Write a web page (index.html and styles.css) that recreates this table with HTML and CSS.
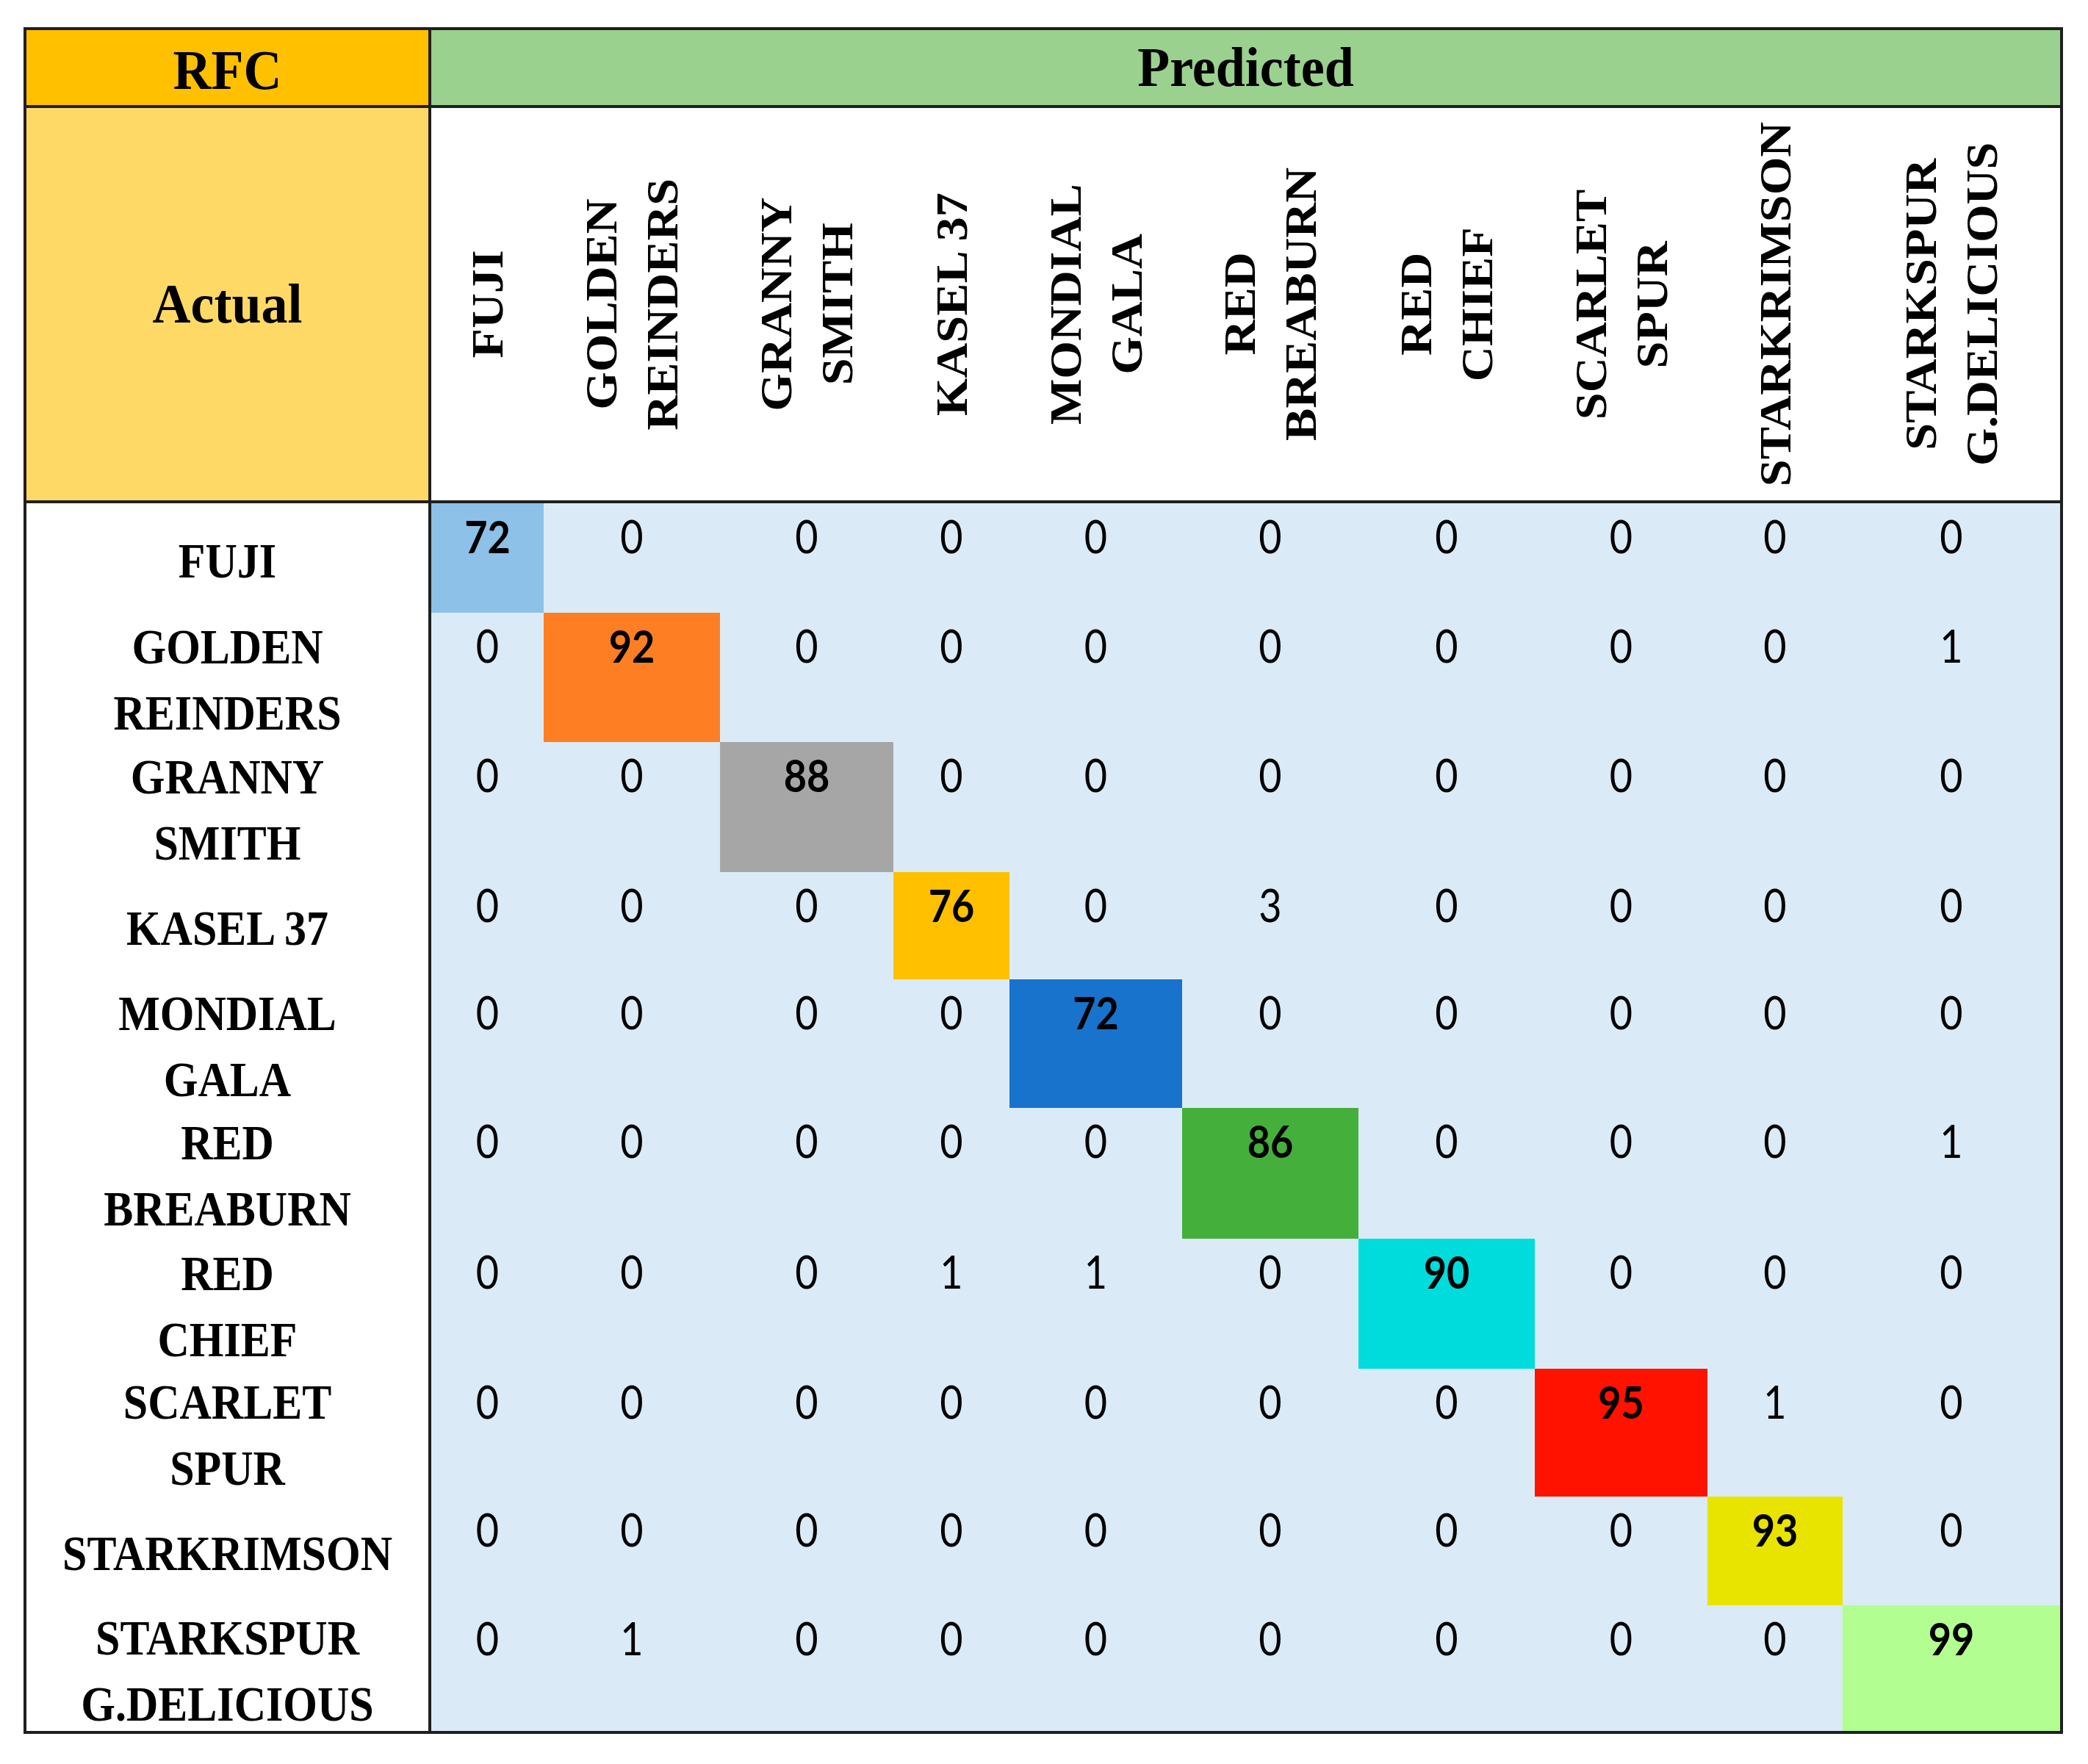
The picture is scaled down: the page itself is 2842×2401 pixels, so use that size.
FILE: index.html
```html
<!DOCTYPE html>
<html lang="en">
<head>
<meta charset="utf-8">
<title>RFC confusion matrix</title>
<link rel="stylesheet" href="styles.css">
</head>
<body>
<div class="matrix">
  <div class="rfc"><span class="title">RFC</span></div>
  <div class="pred-head"><span class="title">Predicted</span></div>
  <div class="actual"><span class="title">Actual</span></div>

  <div class="col-head"><span class="vlabel">FUJI</span></div>
  <div class="col-head"><span class="vlabel">GOLDEN<br>REINDERS</span></div>
  <div class="col-head"><span class="vlabel">GRANNY<br>SMITH</span></div>
  <div class="col-head"><span class="vlabel">KASEL 37</span></div>
  <div class="col-head"><span class="vlabel">MONDIAL<br>GALA</span></div>
  <div class="col-head"><span class="vlabel">RED<br>BREABURN</span></div>
  <div class="col-head"><span class="vlabel">RED<br>CHIEF</span></div>
  <div class="col-head"><span class="vlabel">SCARLET<br>SPUR</span></div>
  <div class="col-head"><span class="vlabel">STARKRIMSON</span></div>
  <div class="col-head"><span class="vlabel">STARKSPUR<br>G.DELICIOUS</span></div>

  <div class="row-head"><span class="hlabel">FUJI</span></div>
  <div class="cell diag c1"><span class="num">72</span></div>
  <div class="cell"><span class="num">0</span></div>
  <div class="cell"><span class="num">0</span></div>
  <div class="cell"><span class="num">0</span></div>
  <div class="cell"><span class="num">0</span></div>
  <div class="cell"><span class="num">0</span></div>
  <div class="cell"><span class="num">0</span></div>
  <div class="cell"><span class="num">0</span></div>
  <div class="cell"><span class="num">0</span></div>
  <div class="cell"><span class="num">0</span></div>

  <div class="row-head"><span class="hlabel">GOLDEN<br>REINDERS</span></div>
  <div class="cell"><span class="num">0</span></div>
  <div class="cell diag c2"><span class="num">92</span></div>
  <div class="cell"><span class="num">0</span></div>
  <div class="cell"><span class="num">0</span></div>
  <div class="cell"><span class="num">0</span></div>
  <div class="cell"><span class="num">0</span></div>
  <div class="cell"><span class="num">0</span></div>
  <div class="cell"><span class="num">0</span></div>
  <div class="cell"><span class="num">0</span></div>
  <div class="cell"><span class="num">1</span></div>

  <div class="row-head"><span class="hlabel">GRANNY<br>SMITH</span></div>
  <div class="cell"><span class="num">0</span></div>
  <div class="cell"><span class="num">0</span></div>
  <div class="cell diag c3"><span class="num">88</span></div>
  <div class="cell"><span class="num">0</span></div>
  <div class="cell"><span class="num">0</span></div>
  <div class="cell"><span class="num">0</span></div>
  <div class="cell"><span class="num">0</span></div>
  <div class="cell"><span class="num">0</span></div>
  <div class="cell"><span class="num">0</span></div>
  <div class="cell"><span class="num">0</span></div>

  <div class="row-head"><span class="hlabel">KASEL 37</span></div>
  <div class="cell"><span class="num">0</span></div>
  <div class="cell"><span class="num">0</span></div>
  <div class="cell"><span class="num">0</span></div>
  <div class="cell diag c4"><span class="num">76</span></div>
  <div class="cell"><span class="num">0</span></div>
  <div class="cell"><span class="num">3</span></div>
  <div class="cell"><span class="num">0</span></div>
  <div class="cell"><span class="num">0</span></div>
  <div class="cell"><span class="num">0</span></div>
  <div class="cell"><span class="num">0</span></div>

  <div class="row-head"><span class="hlabel">MONDIAL<br>GALA</span></div>
  <div class="cell"><span class="num">0</span></div>
  <div class="cell"><span class="num">0</span></div>
  <div class="cell"><span class="num">0</span></div>
  <div class="cell"><span class="num">0</span></div>
  <div class="cell diag c5"><span class="num">72</span></div>
  <div class="cell"><span class="num">0</span></div>
  <div class="cell"><span class="num">0</span></div>
  <div class="cell"><span class="num">0</span></div>
  <div class="cell"><span class="num">0</span></div>
  <div class="cell"><span class="num">0</span></div>

  <div class="row-head"><span class="hlabel">RED<br>BREABURN</span></div>
  <div class="cell"><span class="num">0</span></div>
  <div class="cell"><span class="num">0</span></div>
  <div class="cell"><span class="num">0</span></div>
  <div class="cell"><span class="num">0</span></div>
  <div class="cell"><span class="num">0</span></div>
  <div class="cell diag c6"><span class="num">86</span></div>
  <div class="cell"><span class="num">0</span></div>
  <div class="cell"><span class="num">0</span></div>
  <div class="cell"><span class="num">0</span></div>
  <div class="cell"><span class="num">1</span></div>

  <div class="row-head"><span class="hlabel">RED<br>CHIEF</span></div>
  <div class="cell"><span class="num">0</span></div>
  <div class="cell"><span class="num">0</span></div>
  <div class="cell"><span class="num">0</span></div>
  <div class="cell"><span class="num">1</span></div>
  <div class="cell"><span class="num">1</span></div>
  <div class="cell"><span class="num">0</span></div>
  <div class="cell diag c7"><span class="num">90</span></div>
  <div class="cell"><span class="num">0</span></div>
  <div class="cell"><span class="num">0</span></div>
  <div class="cell"><span class="num">0</span></div>

  <div class="row-head"><span class="hlabel">SCARLET<br>SPUR</span></div>
  <div class="cell"><span class="num">0</span></div>
  <div class="cell"><span class="num">0</span></div>
  <div class="cell"><span class="num">0</span></div>
  <div class="cell"><span class="num">0</span></div>
  <div class="cell"><span class="num">0</span></div>
  <div class="cell"><span class="num">0</span></div>
  <div class="cell"><span class="num">0</span></div>
  <div class="cell diag c8"><span class="num">95</span></div>
  <div class="cell"><span class="num">1</span></div>
  <div class="cell"><span class="num">0</span></div>

  <div class="row-head"><span class="hlabel">STARKRIMSON</span></div>
  <div class="cell"><span class="num">0</span></div>
  <div class="cell"><span class="num">0</span></div>
  <div class="cell"><span class="num">0</span></div>
  <div class="cell"><span class="num">0</span></div>
  <div class="cell"><span class="num">0</span></div>
  <div class="cell"><span class="num">0</span></div>
  <div class="cell"><span class="num">0</span></div>
  <div class="cell"><span class="num">0</span></div>
  <div class="cell diag c9"><span class="num">93</span></div>
  <div class="cell"><span class="num">0</span></div>

  <div class="row-head"><span class="hlabel">STARKSPUR<br>G.DELICIOUS</span></div>
  <div class="cell"><span class="num">0</span></div>
  <div class="cell"><span class="num">1</span></div>
  <div class="cell"><span class="num">0</span></div>
  <div class="cell"><span class="num">0</span></div>
  <div class="cell"><span class="num">0</span></div>
  <div class="cell"><span class="num">0</span></div>
  <div class="cell"><span class="num">0</span></div>
  <div class="cell"><span class="num">0</span></div>
  <div class="cell"><span class="num">0</span></div>
  <div class="cell diag c10"><span class="num">99</span></div>
</div>
</body>
</html>
```

FILE: styles.css
```css
html, body {
  margin: 0;
  padding: 0;
  background: #ffffff;
}

body {
  font-family: "Liberation Serif", serif;
  color: #000000;
}

.matrix {
  box-sizing: border-box;
  margin: 37px 0 0 32px;
  width: 2776px;
  height: 2323px;
  border: 4px solid #1f1f1f;
  display: grid;
  grid-template-columns: 551px 153px 240px 236px 158px 235px 240px 240px 235px 184px 296px;
  grid-template-rows: 106px 538px 149px 176px 177px 146px 175px 178px 177px 174px 148px 171px;
  background: #ffffff;
}

/* header cells */
.rfc,
.pred-head,
.actual,
.col-head,
.row-head {
  box-sizing: border-box;
  display: flex;
  align-items: center;
  justify-content: center;
}

.rfc {
  background: #ffc000;
  border-right: 4px solid #1f1f1f;
  border-bottom: 4px solid #1f1f1f;
}

.pred-head {
  grid-column: 2 / span 10;
  background: #9bd18e;
  border-bottom: 4px solid #1f1f1f;
}

.actual {
  background: #ffd966;
  border-right: 4px solid #1f1f1f;
  border-bottom: 4px solid #1f1f1f;
}

.title {
  display: inline-block;
  font-family: "Liberation Serif", serif;
  font-weight: 700;
  font-size: 72px;
  line-height: 1;
  transform: scaleY(1.06);
}

.rfc .title {
  padding-top: 6px;
}

.col-head {
  background: #ffffff;
  border-bottom: 4px solid #1f1f1f;
}

.vlabel {
  display: inline-block;
  writing-mode: vertical-rl;
  transform: rotate(180deg) scaleY(1.07);
  font-family: "Liberation Serif", serif;
  font-weight: 700;
  font-size: 62px;
  line-height: 83px;
  text-align: center;
  white-space: nowrap;
}

.row-head {
  background: #ffffff;
  border-right: 4px solid #1f1f1f;
}

.hlabel {
  display: inline-block;
  font-family: "Liberation Serif", serif;
  font-weight: 700;
  font-size: 60px;
  line-height: 80px;
  text-align: center;
  white-space: nowrap;
  transform: scaleY(1.12);
  padding-top: 6px;
}

/* data cells */
.cell {
  background: #daebf7;
  display: flex;
  justify-content: center;
  align-items: flex-start;
  padding-top: 14px;
  box-sizing: border-box;
}

.num {
  display: inline-block;
  font-family: Lato, "Liberation Sans", sans-serif;
  font-weight: 400;
  font-size: 54px;
  line-height: 54px;
  transform: scaleY(1.15);
  transform-origin: 50% 0;
}

.diag .num {
  font-weight: 700;
}

.c1 { background: #8dc1e8; }
.c2 { background: #fe7e23; }
.c3 { background: #a6a6a6; }
.c4 { background: #ffc000; }
.c5 { background: #1873cc; }
.c6 { background: #45af3b; }
.c7 { background: #00dcdc; }
.c8 { background: #ff1300; }
.c9 { background: #e8e400; }
.c10 { background: #b3fe90; }
```
